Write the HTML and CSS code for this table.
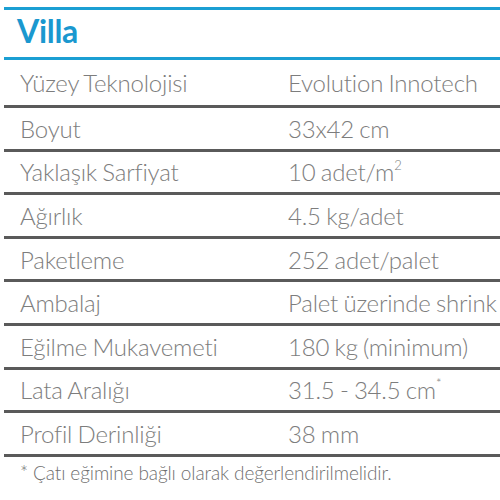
FILE: index.html
```html
<!DOCTYPE html>
<html lang="tr">
<head>
<meta charset="utf-8">
<link rel="stylesheet" href="styles.css">
</head>
<body>
<div class="sheet">
  <div class="title">Villa</div>
  <div class="row row-first"><div class="label">Yüzey Teknolojisi</div><div class="value">Evolution Innotech</div></div>
  <div class="row"><div class="label">Boyut</div><div class="value">33x42 cm</div></div>
  <div class="row"><div class="label">Yaklaşık Sarfiyat</div><div class="value">10 adet/m<sup>2</sup></div></div>
  <div class="row"><div class="label">Ağırlık</div><div class="value">4.5 kg/adet</div></div>
  <div class="row"><div class="label">Paketleme</div><div class="value">252 adet/palet</div></div>
  <div class="row"><div class="label">Ambalaj</div><div class="value">Palet üzerinde shrink</div></div>
  <div class="row"><div class="label">Eğilme Mukavemeti</div><div class="value">180 kg (minimum)</div></div>
  <div class="row"><div class="label">Lata Aralığı</div><div class="value">31.5 - 34.5 cm<sup>*</sup></div></div>
  <div class="row"><div class="label">Profil Derinliği</div><div class="value">38 mm</div></div>
  <div class="note">* Çatı eğimine bağlı olarak değerlendirilmelidir.</div>
</div>
</body>
</html>
```
FILE: styles.css
```css
html, body {
  margin: 0;
  padding: 0;
  background: #ffffff;
}
body {
  font-family: Lato, "Open Sans", "Liberation Sans", sans-serif;
  width: 500px;
  height: 500px;
  overflow: hidden;
}
.sheet {
  margin-top: 7px;
  margin-left: 4px;
}
.title {
  height: 41px;
  padding-bottom: 6px;
  border-top: 3px solid #1b9fd3;
  border-bottom: 3px solid #1b9fd3;
  display: flex;
  align-items: center;
  padding-left: 13px;
  font-size: 32px;
  font-weight: 700;
  color: #1a98cf;
  letter-spacing: -0.3px;
}
.row {
  display: grid;
  grid-template-columns: 268px 1fr;
  align-items: center;
  height: 40.6px;
  padding-left: 16px;
  border-bottom: 3px solid #5a5a5a;
  font-size: 24px;
  font-weight: 300;
  color: #7d7d7d;
  letter-spacing: -0.2px;
  word-spacing: -1px;
  white-space: nowrap;
  overflow: hidden;
}
.row-first {
  height: 45px;
}
.row sup {
  font-size: 13px;
  line-height: 0;
  vertical-align: 11px;
}
.note {
  padding: 4px 0 0 16px;
  font-size: 19px;
  font-weight: 300;
  color: #6f6f6f;
  letter-spacing: -0.1px;
}
```
